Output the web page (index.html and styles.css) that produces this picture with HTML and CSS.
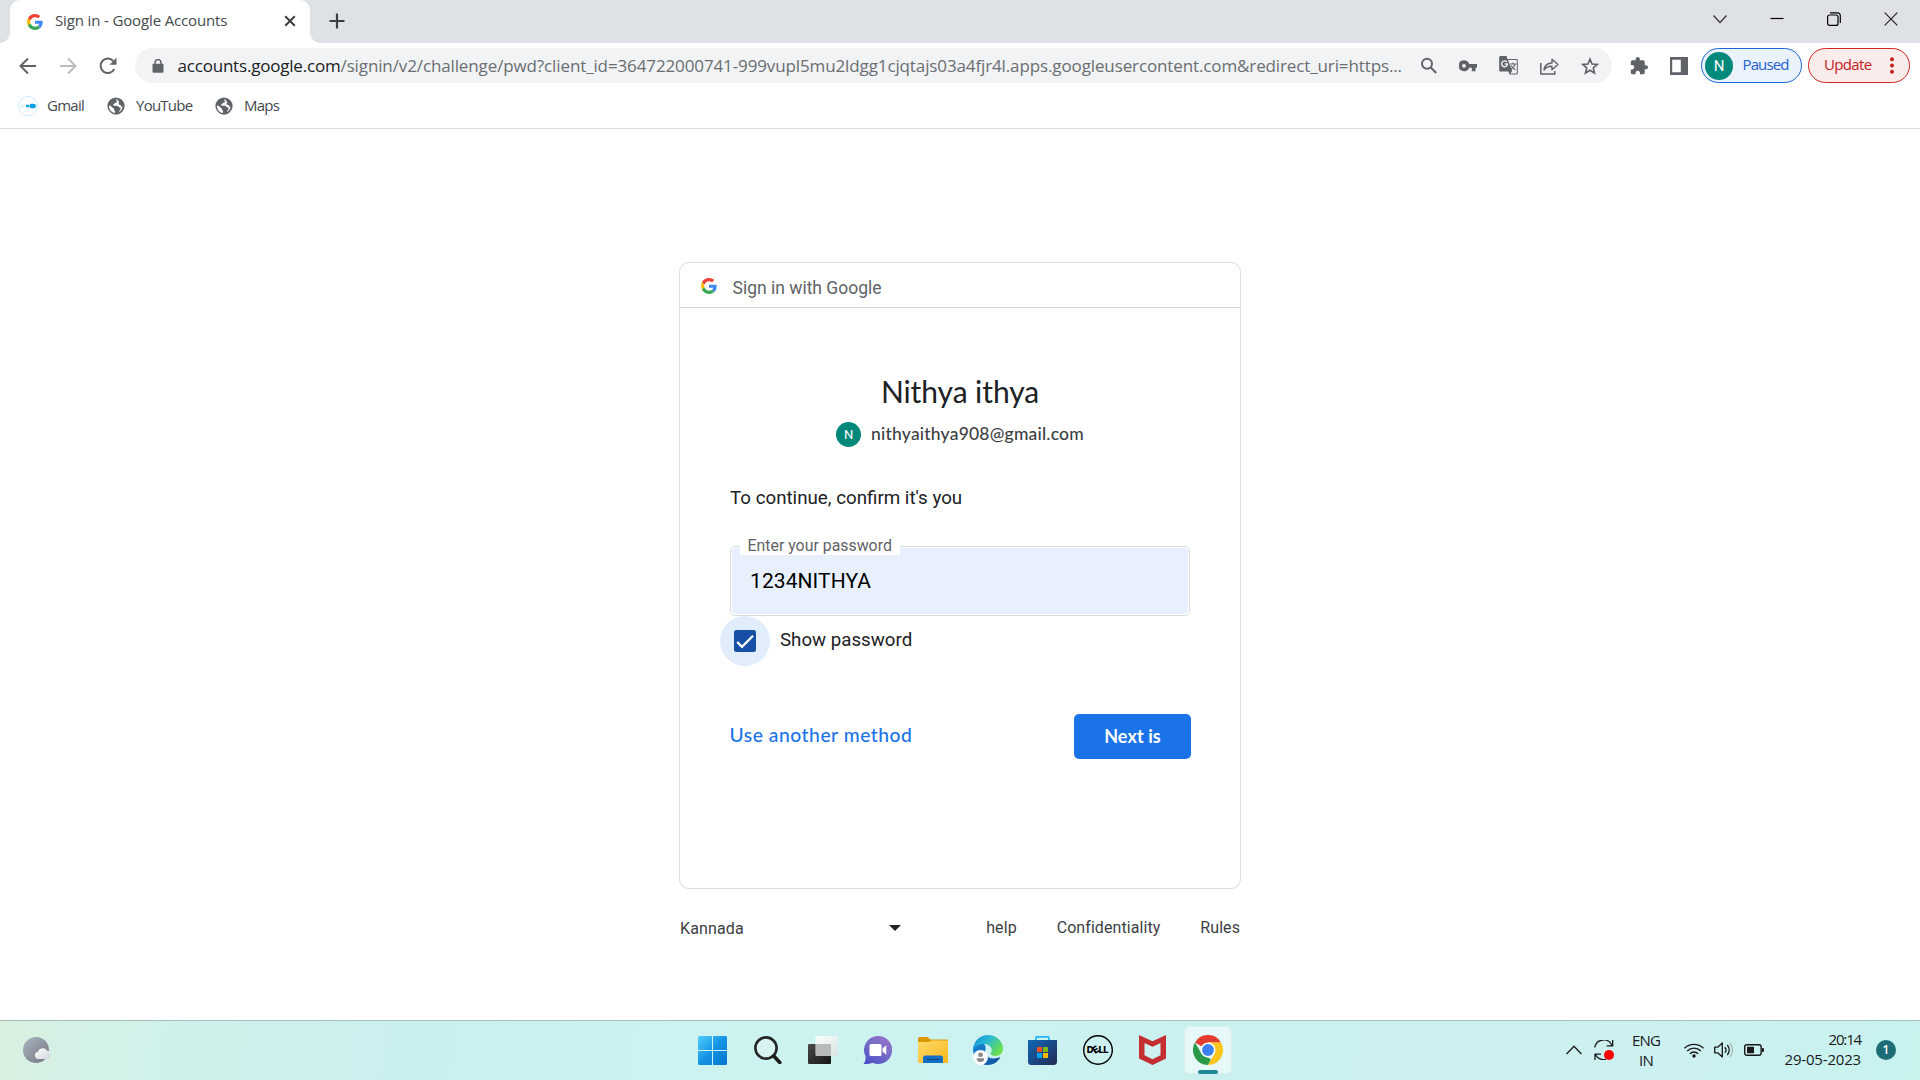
FILE: index.html
```
<!DOCTYPE html>
<html lang="en">
<head>
<meta charset="utf-8">
<title>Sign in - Google Accounts</title>
<link rel="stylesheet" href="styles.css">
</head>
<body>
<svg class="defs" width="0" height="0" aria-hidden="true">
  <defs>
    <symbol id="g-logo" viewBox="0 0 48 48">
      <path fill="#ea4335" d="M24 9.5c3.54 0 6.71 1.22 9.21 3.6l6.85-6.85C35.9 2.38 30.47 0 24 0 14.62 0 6.51 5.38 2.56 13.22l7.98 6.19C12.43 13.72 17.74 9.5 24 9.5z"/>
      <path fill="#4285f4" d="M46.98 24.55c0-1.57-.15-3.09-.38-4.55H24v9.02h12.94c-.58 2.96-2.26 5.48-4.78 7.18l7.73 6c4.51-4.18 7.09-10.36 7.09-17.65z"/>
      <path fill="#fbbc05" d="M10.53 28.59c-.48-1.45-.76-2.99-.76-4.59s.27-3.14.76-4.59l-7.98-6.19C.92 16.46 0 20.12 0 24c0 3.88.92 7.54 2.56 10.78l7.97-6.19z"/>
      <path fill="#34a853" d="M24 48c6.48 0 11.93-2.13 15.89-5.81l-7.73-6c-2.15 1.45-4.92 2.3-8.16 2.3-6.26 0-11.57-4.22-13.47-9.91l-7.98 6.19C6.51 42.62 14.62 48 24 48z"/>
    </symbol>
    <symbol id="globe" viewBox="0 0 24 24">
      <circle cx="12" cy="12" r="11.5" fill="#5f6368"/>
      <path fill="#fff" d="M13.5 2.9C12 3.2 12 4.6 13.2 5.600c1 .8-.2 1.900-1.800 1.900-1.500 0-1.200 1.700-2.600 2-.9.200-.7 1.800.5 2h4c1.900 0 2.200 2.400 3.800 2.600 1.600.2 1.300 2.200.2 3.200-.9.800-.7 2-1.500 3 2.500-1.200 4.700-4 5-7.200-1.200 0-2-.7-2.300-1.800-.4-1.300-2-.6-2.800-1.800-.9-1.400.8-2.200.3-3.300-.3-.8-1.400-.4-1.600-1.400-.2-.800 0-1.500-.9-1.900z"/>
      <path fill="#fff" d="M2.600 11.200c1.800 0 3.600 1.200 4.200 2.300.5 1 2.300.7 2.500 2.100.1 1-.1 1.800.9 2.400.7.500.4 1.700.4 3.200C6 20.600 2.600 17 2.600 11.200z"/>
    </symbol>
  </defs>
</svg>

<div class="tabstrip">
  <div class="tab">
    <svg class="tab-icon" width="16" height="16"><use href="#g-logo"/></svg>
    <span class="tab-title">Sign in - Google Accounts</span>
    <svg class="tab-close" width="12" height="12" viewBox="0 0 12 12"><path d="M1.200 1.200l9.600 9.600M10.800 1.200l-9.600 9.600" stroke="#3c4043" stroke-width="2"/></svg>
  </div>
  <svg class="new-tab" width="16" height="16" viewBox="0 0 16 16"><path d="M8 .5v15M.5 8h15" stroke="#3c4043" stroke-width="2.200"/></svg>
  <div class="window-buttons">
    <svg width="14" height="14" viewBox="0 0 14 14"><path d="M.5 3.500l6.500 7 6.500-7" fill="none" stroke="#333" stroke-width="1.200"/></svg>
    <svg width="14" height="14" viewBox="0 0 14 14"><path d="M.5 6.500h13" stroke="#000" stroke-width="1.200"/></svg>
    <svg width="14" height="14" viewBox="0 0 14 14"><rect x=".6" y="3" width="10.400" height="10.400" rx="2" fill="none" stroke="#000" stroke-width="1.200"/><path d="M3 .8h7.500a2.800 2.800 0 0 1 2.800 2.800V11" fill="none" stroke="#000" stroke-width="1.200"/></svg>
    <svg width="14" height="14" viewBox="0 0 14 14"><path d="M.7.7l12.600 12.600M13.300.7L.7 13.300" stroke="#222" stroke-width="1.200"/></svg>
  </div>
</div>

<div class="toolbar">
  <div class="nav">
    <svg width="18" height="18" viewBox="0 0 18 18"><path d="M17 9H2M9 1.500L1.500 9 9 16.500" fill="none" stroke="#5f6368" stroke-width="2"/></svg>
    <svg width="18" height="18" viewBox="0 0 18 18"><path d="M1 9h15M9 1.500L16.500 9 9 16.500" fill="none" stroke="#babcbe" stroke-width="2"/></svg>
    <svg width="18" height="18" viewBox="0 0 18 18"><path d="M15.300 11.800A7.200 7.200 0 1 1 14.300 4.200" fill="none" stroke="#5f6368" stroke-width="2"/><path d="M17.500.7v7h-7z" fill="#5f6368"/></svg>
  </div>
  <div class="omnibox">
    <svg class="lock" width="12" height="14" viewBox="0 0 12 14"><rect x=".5" y="4.800" width="11" height="9" rx="1.200" fill="#5f6368"/><path d="M3 6V3.600a3 3 0 0 1 6 0V6" fill="none" stroke="#5f6368" stroke-width="1.500"/></svg>
    <span class="url"><span class="host">accounts.google.com</span><span class="path">/signin/v2/challenge/pwd?client_id=364722000741-999vupl5mu2ldgg1cjqtajs03a4fjr4l.apps.googleusercontent.com&amp;redirect_uri=https...</span></span>
    <div class="page-actions">
      <svg width="18" height="18" viewBox="0 0 18 18"><circle cx="7" cy="6.700" r="5" fill="none" stroke="#5f6368" stroke-width="1.900"/><path d="M10.600 10.300l5.600 5.700" stroke="#5f6368" stroke-width="2"/></svg>
      <svg width="18" height="18" viewBox="0 0 18 18"><path fill="#5f6368" fill-rule="evenodd" d="M5 3.200a5.500 5.500 0 0 1 5.200 3.700H18v3.900h-1.500v3.400h-3.700v-3.400h-2.600A5.500 5.500 0 1 1 5 3.200zM5 6.900a1.900 1.900 0 1 0 0 3.800 1.900 1.900 0 0 0 0-3.800z"/></svg>
      <svg width="19" height="19" viewBox="0 0 19 19"><path fill="#5f6368" d="M1.500 0h6l1 3h9a1.300 1.300 0 0 1 1.300 1.300v12.900a1.300 1.300 0 0 1-1.300 1.300H10.500L9.500 15.500h-8A1.300 1.300 0 0 1 .2 14.200V1.300A1.300 1.300 0 0 1 1.500 0z"/><path fill="#f1f3f4" d="M9 4h8.300l.5.500v12.600l-.5.400h-6l2-2.500z"/><path d="M7.800 5.900A2.900 2.900 0 1 0 8.500 8H5.800" fill="none" stroke="#f1f3f4" stroke-width="1.400"/><path d="M11 8h6.500M14 6.500V8M16 8c-.5 2.500-2 4-4 5M12 9.500c1 1.500 2.500 3 4.500 4.500" fill="none" stroke="#5f6368" stroke-width="1.100"/></svg>
      <svg width="19" height="18" viewBox="0 0 19 18"><path d="M.8 6v11h14v-3" fill="none" stroke="#5f6368" stroke-width="1.500"/><path d="M4 13c.5-4.500 3.400-6.800 8-7V2.300l6 5.200-6 5.200V9.300C8.500 9.200 6 10.300 4 13z" fill="none" stroke="#5f6368" stroke-width="1.400" stroke-linejoin="round"/></svg>
      <svg width="18" height="18" viewBox="0 0 24 24"><path d="M12 2.800l2.700 6.500 7 .6-5.300 4.600 1.600 6.900L12 17.700l-6 3.700 1.600-6.900L2.300 9.900l7-.6z" fill="none" stroke="#5f6368" stroke-width="2.200"/></svg>
    </div>
  </div>
  <svg class="puzzle" width="18" height="18" viewBox="1 1 22 22"><path fill="#5f6368" d="M20.500 11H19V7c0-1.100-.9-2-2-2h-4V3.500C13 2.120 11.880 1 10.500 1S8 2.120 8 3.500V5H4c-1.100 0-1.990.9-1.990 2v3.800H3.500c1.490 0 2.700 1.210 2.700 2.700s-1.210 2.700-2.700 2.700H2V20c0 1.100.9 2 2 2h3.800v-1.500c0-1.490 1.210-2.700 2.700-2.700s2.700 1.210 2.700 2.700V22H17c1.100 0 2-.9 2-2v-4h1.500c1.380 0 2.500-1.120 2.500-2.500S21.880 11 20.500 11z"/></svg>
  <svg class="side-panel" width="18" height="18" viewBox="0 0 18 18"><path fill="#5f6368" fill-rule="evenodd" d="M0 0h18v18H0zM2.200 2.800v12.400h8.600V2.800z"/></svg>
  <div class="pill profile"><span class="avatar">N</span><span class="pill-text">Paused</span></div>
  <div class="pill update"><span class="pill-text">Update</span><svg width="4" height="17" viewBox="0 0 4 17"><g fill="#c5221f"><circle cx="2" cy="2.200" r="2"/><circle cx="2" cy="8.500" r="2"/><circle cx="2" cy="14.800" r="2"/></g></svg></div>
</div>

<div class="bookmarks">
  <svg width="20" height="20" viewBox="0 0 20 20"><circle cx="10" cy="10" r="9.500" fill="#fff" stroke="#c9eafa" /><rect x="3" y="8.500" width="3" height="3" fill="#d9f1fc"/><rect x="8" y="8.800" width="3" height="2.400" fill="#0b9fe4"/><rect x="11.500" y="7.800" width="6.300" height="4.400" rx="1.800" fill="#0b9fe4"/></svg>
  <span class="bm-gmail">Gmail</span>
  <svg width="18" height="18"><use href="#globe"/></svg>
  <span class="bm-youtube">YouTube</span>
  <svg width="18" height="18"><use href="#globe"/></svg>
  <span class="bm-maps">Maps</span>
</div>

<main class="page">
  <section class="card">
    <header class="card-head">
      <svg width="16" height="16"><use href="#g-logo"/></svg>
      <span>Sign in with Google</span>
    </header>
    <div class="card-body">
      <h1>Nithya ithya</h1>
      <div class="account"><span class="account-avatar">N</span><span class="account-mail">nithyaithya908@gmail.com</span></div>
      <p class="prompt">To continue, confirm it's you</p>
      <div class="field"><label class="field-label">Enter your password</label><div class="field-value">1234NITHYA</div></div>
      <div class="show">
        <span class="check"><svg width="22" height="22" viewBox="0 0 22 22"><rect width="22" height="22" rx="2.500" fill="#174ea6"/><path d="M3.200 12l4.800 4.900L19 5.800" fill="none" stroke="#fff" stroke-width="2.300"/></svg></span>
        <span class="show-text">Show password</span>
      </div>
      <div class="actions"><a class="alt">Use another method</a><button class="next">Next is</button></div>
    </div>
  </section>
  <footer class="footer">
    <span class="lang">Kannada</span>
    <svg class="caret" width="12" height="6" viewBox="0 0 12 6"><path d="M0 0h12L6 6z" fill="#202124"/></svg>
    <nav class="links"><span>help</span><span>Confidentiality</span><span>Rules</span></nav>
  </footer>
</main>

<div class="taskbar">
  <div class="widgets">
    <svg width="28" height="26" viewBox="0 0 28 26"><defs><linearGradient id="moon" x2="1" y2="1"><stop stop-color="#a9b3bf"/><stop offset="1" stop-color="#737882"/></linearGradient><linearGradient id="cloud" x2="1" y2="1"><stop stop-color="#fff"/><stop offset="1" stop-color="#cfd3da"/></linearGradient></defs><circle cx="13" cy="13" r="13" fill="url(#moon)"/><path d="M15 22a3.700 3.700 0 0 1 0-7.300 5 5 0 0 1 9-1A4.200 4.200 0 0 1 24.500 22z" fill="url(#cloud)"/></svg>
  </div>
  <div class="apps">
    <div class="app"><svg width="29" height="29" viewBox="0 0 29 29"><defs><linearGradient id="win" gradientUnits="userSpaceOnUse" x1="0" y1="0" x2="29" y2="29"><stop stop-color="#4fd0fd"/><stop offset=".5" stop-color="#1493e4"/><stop offset="1" stop-color="#0573cf"/></linearGradient></defs><path fill="url(#win)" d="M1.500 0H14v14H0V1.500Q0 0 1.500 0zM15 0h12.500Q29 0 29 1.500V14H15zM0 15h14v14H1.500Q0 29 0 27.500zM15 15h14v12.500q0 1.500-1.500 1.500H15z"/></svg></div>
    <div class="app"><svg width="28" height="28" viewBox="0 0 28 28"><circle cx="12" cy="12" r="10.600" fill="#d9f3f2" stroke="#262626" stroke-width="2.600"/><path d="M19.800 20l6 6.500" stroke="#1c1c1c" stroke-width="3.600" stroke-linecap="round"/></svg></div>
    <div class="app"><svg width="30" height="28" viewBox="0 0 30 28"><defs><linearGradient id="tv" x2="1" y2="1"><stop stop-color="#4a4a48"/><stop offset="1" stop-color="#151515"/></linearGradient><linearGradient id="tw" x2="1" y2="1"><stop stop-color="#fff"/><stop offset="1" stop-color="#dde3e3"/></linearGradient></defs><rect y="8" width="23" height="20" rx="1" fill="url(#tv)"/><rect x="7.500" y="0" width="22.500" height="20" rx="1" fill="url(#tw)" opacity=".9"/><path d="M8 8h15v12H8z" fill="#b9bbba"/></svg></div>
    <div class="app"><svg width="29" height="28" viewBox="0 0 29 28"><defs><linearGradient id="chat" x1=".9" x2=".2" y2="1"><stop stop-color="#a06ed0"/><stop offset=".4" stop-color="#7b6fc6"/><stop offset="1" stop-color="#4f52c8"/></linearGradient></defs><path d="M15 0a14 14 0 1 1-5.500 26.800Q6 28.500.5 28 3 25.500 2.600 20.500A14 14 0 0 1 15 0z" fill="url(#chat)"/><rect x="6.500" y="8" width="12" height="12" rx="1.500" fill="#fff"/><path d="M19.500 12.500l3.800-3.200v9.400l-3.800-3.200z" fill="#fff"/></svg></div>
    <div class="app"><svg width="30" height="26" viewBox="0 0 30 26"><defs><linearGradient id="fold" x2="1" y2="1"><stop stop-color="#ffd969"/><stop offset="1" stop-color="#fbb91d"/></linearGradient></defs><path d="M1.500 0h8l3 2.500H29q1 0 1 1V8H0V1.500Q0 0 1.500 0z" fill="#dc9a06"/><path d="M0 5h11l2.500-1.500H30V25q0 1-1 1H1q-1 0-1-1z" fill="url(#fold)"/><path d="M5 26v-5q0-2.500 2.500-2.500h15q2.500 0 2.500 2.500v5z" fill="#1271c4"/><path d="M8.500 22.500h13" stroke="#0a4a8c" stroke-width="1.300"/></svg></div>
    <div class="app"><svg width="30" height="30" viewBox="0 0 30 30"><defs><linearGradient id="e1" x2="1" y2=".6"><stop stop-color="#0f86d3"/><stop offset=".45" stop-color="#28b8d5"/><stop offset="1" stop-color="#6be04e"/></linearGradient><linearGradient id="e2" x2="1" y2="1"><stop stop-color="#1a86d8"/><stop offset="1" stop-color="#0c4f9c"/></linearGradient></defs><path d="M0 14c0-3 3-6 7-6 4 0 6 2 5.500 6-1.500 4 1.500 9.500 7.500 9.500 3 0 5.500-.8 7.500-1.500C25 27 20 30 14.500 30 6.500 30 0 23 0 14z" fill="url(#e2)"/><path d="M0 14C1 5.500 7.500 0 15 0c8 0 15 6 15 13.500 0 4.500-3 7.500-7.500 7.500-3.500 0-5-1.300-5-2.400 0-1 1.200-1.400 1.200-3.700 0-3-3.200-6-8-6C6 8.900 2 11 0 14z" fill="url(#e1)"/><circle cx="7.500" cy="22.500" r="7.500" fill="#fafafa"/><circle cx="7.500" cy="19.800" r="2.400" fill="#8a8a8a"/><path d="M3.800 23.300h7.400q.3 3.700-3.700 3.700t-3.700-3.700z" fill="#8a8a8a"/></svg></div>
    <div class="app"><svg width="29" height="29" viewBox="0 0 29 29"><defs><linearGradient id="store" x2="1" y2="1"><stop stop-color="#0f68b8"/><stop offset="1" stop-color="#232a52"/></linearGradient></defs><path d="M8 5.500V2q0-1.200 1.200-1.200h10.600Q21 .8 21 2v3.500" fill="none" stroke="#1eb5f2" stroke-width="1.700"/><path d="M0 4h29v21.500q0 3.500-3.500 3.500h-22Q0 29 0 25.500z" fill="url(#store)"/><path fill="#f25022" d="M9 11h5v5H9z"/><path fill="#7fba00" d="M15 11h5v5h-5z"/><path fill="#00a4ef" d="M9 17h5v5H9z"/><path fill="#ffb900" d="M15 17h5v5h-5z"/></svg></div>
    <div class="app dell"><svg width="30" height="30" viewBox="0 0 30 30"><circle cx="15" cy="15" r="14.300" fill="none" stroke="#000" stroke-width="1.400"/></svg><span>D<i>E</i>LL</span></div>
    <div class="app"><svg width="27" height="30" viewBox="0 0 27 30"><path fill="#c42e30" d="M0 0l13.500 6.200L27 0v23.500L13.500 30 0 23.500z"/><path fill="#cdf1f0" d="M5.500 8l8 3.800 8-3.800v12.300l-8 3.900-8-3.900z"/></svg></div>
    <div class="app active"><svg width="30" height="30" viewBox="0 0 30 30"><path fill="#e33b2e" d="M15 15L2 7.500A15 15 0 0 1 28 7.500H15z"/><path fill="#2a9a48" d="M15 30A15 15 0 0 1 2 7.500L8.500 18.700 15 22.500l3 2z"/><path fill="#fbc51d" d="M28 7.500A15 15 0 0 1 15 30l6.500-11.250L21.500 11 15 7.500z"/><circle cx="15" cy="15" r="7.500" fill="#fff"/><circle cx="15" cy="15" r="5.900" fill="#3c7ff0"/></svg><span class="running"></span></div>
  </div>
  <div class="tray">
    <svg class="t-up" width="16" height="10" viewBox="0 0 16 10"><path d="M.6 9L8 1.200 15.400 9" fill="none" stroke="#1a1a1a" stroke-width="1.300"/></svg>
    <svg class="t-sync" width="20" height="20" viewBox="0 0 20 20"><path d="M.8 7.500A9 9 0 0 1 18 5.500M18.700 0v5.800h-6M1 20v-5.800h6M1.500 14.800A9 9 0 0 0 12 19.300" fill="none" stroke="#1a1a1a" stroke-width="1.300"/><circle cx="15" cy="15" r="5" fill="#f00"/></svg>
    <div class="t-lang"><span>ENG</span><span>IN</span></div>
    <svg class="t-wifi" width="20" height="15" viewBox="0 0 20 15"><g fill="none" stroke="#1a1a1a" stroke-width="1.300"><path d="M.5 5.300a13.400 13.400 0 0 1 19 0M3.200 8a9.600 9.600 0 0 1 13.600 0M5.900 10.700a5.800 5.800 0 0 1 8.200 0"/></g><circle cx="10" cy="13" r="1.700" fill="#1a1a1a"/></svg>
    <svg class="t-sound" width="20" height="16" viewBox="0 0 20 16"><path d="M.7 5.200h3L8.300 1v14l-4.600-4.200h-3z" fill="none" stroke="#1a1a1a" stroke-width="1.300" stroke-linejoin="round"/><path d="M10.800 5.200a4.200 4.200 0 0 1 0 5.600M13.300 3a7.500 7.500 0 0 1 0 10" fill="none" stroke="#1a1a1a" stroke-width="1.300"/><path d="M15.800 1a10.500 10.500 0 0 1 0 14" fill="none" stroke="#9dbab9" stroke-width="1.200"/></svg>
    <svg class="t-batt" width="20" height="12" viewBox="0 0 20 12"><rect x=".7" y=".7" width="16.400" height="10.600" rx="2" fill="none" stroke="#1a1a1a" stroke-width="1.400"/><rect x="3" y="2.800" width="7" height="6.400" fill="#1a1a1a"/><path d="M18 4h1q1 0 1 1v2q0 1-1 1h-1z" fill="#1a1a1a"/></svg>
    <div class="t-clock"><span class="time">20:14</span><span class="date">29-05-2023</span></div>
    <span class="t-badge">1</span>
  </div>
</div>
</body>
</html>
```
FILE: styles.css
```
* { box-sizing: border-box; }
html, body { margin: 0; height: 100%; overflow: hidden; }
body {
  display: flex; flex-direction: column; width: 1920px; height: 1080px;
  background: #fff; color: #202124; font-family: "Open Sans", "Noto Sans", sans-serif; white-space: nowrap;
}
svg { display: block; flex: none; }
.defs { position: absolute; }

/* Tab strip */
.tabstrip { display: flex; height: 43px; background: #dee1e6; padding-left: 10px; flex: none; }
.tab {
  position: relative; display: flex; align-items: center; width: 300px; height: 43px;
  padding: 0 14px 2px 17px; background: #fff; border-radius: 10px 10px 0 0;
}
.tab::before, .tab::after { content: ""; position: absolute; bottom: 0; width: 10px; height: 10px; }
.tab::before { left: -10px; background: radial-gradient(circle at 0 0, transparent 9.5px, #fff 10px); }
.tab::after { right: -10px; background: radial-gradient(circle at 100% 0, transparent 9.5px, #fff 10px); }
.tab-title { margin-left: 12px; padding-bottom: 2px; font-size: 15px; letter-spacing: -.14px; line-height: 20px; color: #45494d; }
.tab-icon { margin-top: 2px; }
.tab-close { margin-left: auto; margin-top: 1px; }
.new-tab { margin: 13px 0 0 19px; }
.window-buttons { display: flex; gap: 43px; margin: 12px 22px 0 auto; }

/* Toolbar */
.toolbar { display: flex; align-items: center; height: 45px; flex: none; padding-right: 10px; }
.nav { display: flex; gap: 22px; margin-left: 18.500px; }
.omnibox {
  display: flex; align-items: center; width: 1477px; height: 35px; margin-left: 18.500px; padding: 0 13.500px 0 16.500px;
  background: #f1f3f4; border-radius: 18px;
}
.url { margin-left: 14px; font-size: 17px; line-height: 24px; color: #6a6e72; }
.host { color: #202124; letter-spacing: -.198px; }
.path { letter-spacing: -.12px; }
.page-actions { display: flex; align-items: center; gap: 21.700px; margin-left: auto; }
.puzzle { margin-left: 17.500px; }
.side-panel { margin-left: 22px; }
.pill { display: flex; align-items: center; height: 35px; border: 1.500px solid; border-radius: 18px; font-size: 15px; line-height: 20px; }
.profile { width: 101px; margin-left: 13.500px; padding-left: 3px; color: #2260cf; border-color: #1a66d6; background: #eaf2fc; }
.profile .pill-text { letter-spacing: -.885px; margin-left: 9.500px; padding-bottom: 3px; }
.avatar { width: 28px; height: 28px; border-radius: 50%; background: #00897b; color: #fff; text-align: center; font: 15px/28px "Roboto", sans-serif; }
.update { width: 102px; margin-left: 6px; padding: 0 15px; color: #c5221f; border-color: #cf2622; background: #faeceb; }
.update .pill-text { letter-spacing: -.651px; padding-bottom: 3px; }
.update svg { margin-left: auto; }

/* Bookmarks bar */
.bookmarks {
  display: flex; align-items: center; height: 41px; padding: 0 0 4px 18px; flex: none;
  border-bottom: 1px solid #dadce0; font-size: 15px; line-height: 20px; letter-spacing: -.75px; color: #45494d;
}
.bm-gmail, .bm-youtube, .bm-maps { flex: none; padding-bottom: 2px; }
.bm-gmail { width: 60px; margin-left: 9px; }
.bm-youtube { width: 79px; margin-left: 11px; }
.bm-maps { margin-left: 11px; }

/* Sign-in card */
.page { flex: 1; display: flex; flex-direction: column; align-items: center; padding-top: 133px; font-family: "Roboto", sans-serif; }
.card { width: 562px; height: 627px; border: 1px solid #dadce0; border-radius: 10px; }
.card-head { display: flex; height: 45px; padding: 15px 0 0 20.500px; border-bottom: 1px solid #cfd1d4; font-size: 17.500px; line-height: 20px; color: #5f6368; }
.card-head span { margin-left: 16px; }
.card-body { display: flex; flex-direction: column; padding: 65px 50px 0; }
h1 { margin: 0; text-align: center; font: 400 30px/36px "Lato", sans-serif; letter-spacing: -.08px; }
.account { display: flex; align-items: center; justify-content: center; height: 25px; margin-top: 13px; }
.account-avatar { width: 25px; height: 25px; border-radius: 50%; background: #00897b; color: #fff; text-align: center; font-size: 13px; line-height: 25px; }
.account-mail { margin-left: 10px; padding-bottom: 1px; font: 500 17.500px/22px "Lato", sans-serif; letter-spacing: .2px; color: #3c4043; }
.prompt { margin: 39px 0 0; font-size: 18.750px; line-height: 24px; }
.field { position: relative; height: 70px; margin-top: 36px; padding: 1px; border: 1px solid #dadce0; border-radius: 5px; }
.field-value { height: 100%; padding-left: 18px; background: #e8f0fe; border-radius: 4px; font-size: 21px; letter-spacing: .08px; line-height: 66px; color: #000; }
.field-label { position: absolute; left: 9px; top: -11px; width: 160px; padding-left: 7.500px; background: #fff; font-size: 15.880px; line-height: 19px; color: #5f6368; }
.show { display: flex; align-items: center; height: 50px; margin-left: -10px; }
.check { display: flex; align-items: center; justify-content: center; width: 50px; height: 50px; border-radius: 50%; background: #e1edfb; }
.show-text { margin-left: 10px; padding-bottom: 3px; font-size: 18.720px; }
.actions { display: flex; align-items: center; justify-content: space-between; margin: 48px -1px 0 0; }
.alt { margin-left: -.5px; padding-bottom: 4px; font: 500 19.300px/24px "Lato", sans-serif; letter-spacing: .52px; color: #1a73e8; }
.next { width: 117px; height: 45px; padding: 0 0 2px; border: 0; border-radius: 5px; background: #1a73e8; color: #fff; font: 700 18px/22px "Lato", sans-serif; letter-spacing: .1px; }
.footer { display: flex; align-items: center; width: 562px; height: 20px; margin-top: 29px; font-size: 16px; color: #3c4043; }
.lang { width: 210px; padding: 1px 0 0 1px; letter-spacing: .15px; }
.links { display: flex; gap: 40px; margin-left: auto; padding: 0 1px 1px 0; letter-spacing: .07px; }

/* Taskbar */
.taskbar {
  display: flex; align-items: center; height: 60px; flex: none; border-top: 1px solid #a3bfbe; padding-bottom: 1px;
  background: linear-gradient(100deg, #d9f0df 0, #d1f1e9 130px, #cdf0ed 300px, #caeff0 420px, #cdf3f1 800px, #cbf0f0 1200px, #cdf0f1 1650px, #c6f2ee 1920px);
}
.widgets { width: 685px; padding-left: 23px; flex: none; }
.apps { display: grid; grid-template-columns: repeat(10, 55px); align-items: center; }
.app { position: relative; display: flex; align-items: center; justify-content: center; height: 48px; }
.app.active { width: 48px; justify-self: center; background: #e6f8f8; border: 1px solid #d9eeee; border-radius: 5px; }
.running { position: absolute; left: 13px; bottom: -1px; width: 20px; height: 4px; border-radius: 2px; background: #1f8696; }
.dell span { position: absolute; font: 800 9.500px/12px "Inter", sans-serif; letter-spacing: -.5px; color: #000; }
.dell i { display: inline-block; font-style: normal; transform: rotate(-32deg); }
.tray { display: flex; align-items: center; margin-left: auto; padding-right: 24px; color: #1a1a1a; font-size: 15px; line-height: 20px; }
.t-sync { margin-left: 12px; }
.t-lang { display: flex; flex-direction: column; align-items: center; width: 30px; margin-left: 17px; padding-bottom: 1px; letter-spacing: -.85px; }
.t-wifi { margin-left: 23px; }
.t-sound { margin-left: 10px; }
.t-batt { margin-left: 10px; }
.t-clock { display: flex; flex-direction: column; align-items: flex-end; width: 78px; margin-left: 19px; padding-bottom: 2px; }
.time { letter-spacing: -1.150px; }
.date { letter-spacing: -.178px; }
.t-badge { width: 20px; height: 20px; margin-left: 15px; border-radius: 50%; background: #1d6c78; color: #fff; text-align: center; font-size: 12px; font-weight: 600; }
```
